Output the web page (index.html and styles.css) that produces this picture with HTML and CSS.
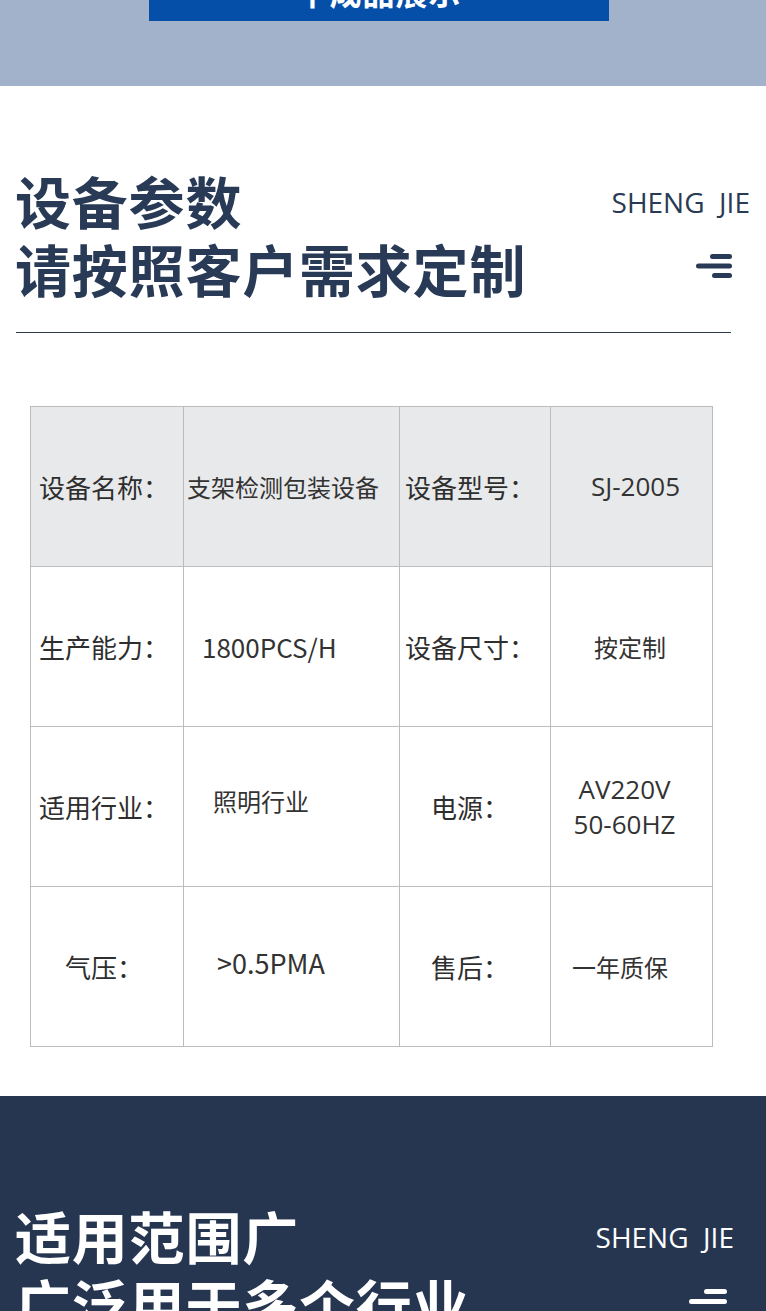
FILE: index.html
```html
<!DOCTYPE html>
<html lang="zh-CN">
<head>
<meta charset="utf-8">
<title>设备参数</title>
<link rel="stylesheet" href="styles.css">
</head>
<body>
<div class="top-band">
  <div class="banner">半成品展示</div>
</div>

<section class="params">
  <header class="sec-head">
    <h2 class="sec-title">设备参数<br>请按照客户需求定制</h2>
    <div class="brand">
      <div class="brand-name">SHENG&nbsp; JIE</div>
      <svg class="brand-icon" width="37" height="24" viewBox="0 0 37 24" aria-hidden="true">
        <rect x="14" y="0" width="22" height="5" rx="2.5"/>
        <rect x="0" y="9.5" width="36" height="5" rx="2.5"/>
        <rect x="16" y="19" width="20" height="5" rx="2.5"/>
      </svg>
    </div>
  </header>
  <hr class="rule">

  <table class="spec">
    <colgroup>
      <col class="c1"><col class="c2"><col class="c3"><col class="c4">
    </colgroup>
    <tr class="head-row">
      <td class="label">设备名称：</td>
      <td class="val pl-3">支架检测包装设备</td>
      <td class="label label-r">设备型号：</td>
      <td class="val num pl-40">SJ-2005</td>
    </tr>
    <tr>
      <td class="label">生产能力：</td>
      <td class="val cond pl-18">1800PCS/H</td>
      <td class="label label-r">设备尺寸：</td>
      <td class="val pl-43">按定制</td>
    </tr>
    <tr>
      <td class="label">适用行业：</td>
      <td class="val pl-29 up-6">照明行业</td>
      <td class="label label-r">电源：</td>
      <td class="val num center-l">AV220V<br>50-60HZ</td>
    </tr>
    <tr>
      <td class="label">气压：</td>
      <td class="val cond cond-l pl-33 up-4">&gt;0.5PMA</td>
      <td class="label label-r">售后：</td>
      <td class="val pl-21">一年质保</td>
    </tr>
  </table>
</section>

<section class="scope">
  <header class="sec-head sec-head-dark">
    <h2 class="sec-title">适用范围广<br>广泛用于多个行业</h2>
    <div class="brand">
      <div class="brand-name">SHENG&nbsp; JIE</div>
      <svg class="brand-icon brand-icon-dark" width="38" height="15" viewBox="0 0 38 15" aria-hidden="true">
        <rect x="15" y="0" width="23" height="5" rx="2.5"/>
        <rect x="0" y="10" width="38" height="5" rx="2.5"/>
      </svg>
    </div>
  </header>
</section>
</body>
</html>
```

FILE: styles.css
```css
html, body {
  margin: 0;
  padding: 0;
  background: #ffffff;
}

body {
  font-family: "Noto Sans CJK SC", "Noto Sans", sans-serif;
  color: #333333;
}

.top-band {
  display: flow-root;
  height: 86px;
  background: #a2b2ca;
  overflow: hidden;
}

.banner {
  width: 460px;
  height: 60px;
  margin: -39px 0 0 149px;
  background: #064fa9;
  color: #ffffff;
  font-weight: 700;
  font-size: 32px;
  line-height: 60px;
  text-align: center;
  letter-spacing: 1px;
}

.params {
  padding: 80px 0 49px;
}

.sec-head {
  display: flex;
  justify-content: space-between;
  align-items: flex-start;
  padding: 0 16px 0 15px;
}

.sec-title {
  margin: 0;
  font-family: "Noto Sans CJK SC", sans-serif;
  font-weight: 700;
  font-size: 56px;
  line-height: 68px;
  letter-spacing: 0.8px;
  color: #283a55;
}

.brand {
  display: flex;
  flex-direction: column;
  align-items: flex-end;
  padding-top: 19px;
}

.brand-name {
  font-family: "Open Sans", "Noto Sans", sans-serif;
  font-size: 28px;
  line-height: 34px;
  color: #283a55;
  white-space: nowrap;
}

.brand-icon {
  display: block;
  margin: 35px 17px 0 0;
  fill: #283a55;
}

.rule {
  margin: 30px 35px 0 16px;
  border: 0;
  border-top: 1px solid #2d3d50;
  height: 0;
}

.spec {
  margin: 73px 0 0 30px;
  border-collapse: collapse;
  table-layout: fixed;
  width: 682px;
}

.c1 { width: 153px; }
.c2 { width: 216px; }
.c3 { width: 151px; }
.c4 { width: 162px; }

.spec tr {
  height: 160px;
}

.spec td {
  border: 1px solid #bcbcbc;
  padding: 0;
  vertical-align: middle;
  font-size: 24px;
  line-height: 32px;
  color: #333333;
  white-space: nowrap;
}

.head-row td {
  background: #e8e9eb;
}

.spec .label {
  text-align: center;
  padding-right: 6px;
  font-size: 26px;
  font-weight: 400;
  color: #2e2e2e;
}

.spec .label-r {
  padding-right: 10px;
}

.val {
  text-align: left;
}

.spec .num {
  font-family: "Open Sans", "Noto Sans", sans-serif;
  font-size: 26px;
  line-height: 35px;
  font-weight: 500;
}

.spec .cond {
  font-family: "Noto Sans CJK SC", sans-serif;
  font-size: 26px;
}

.spec .cond-l {
  font-size: 27px;
}

.spec .center-l {
  text-align: center;
  padding-right: 14px;
}

.spec .pl-3 { padding-left: 3px; }
.spec .pl-18 { padding-left: 18px; }
.spec .pl-21 { padding-left: 21px; }
.spec .pl-29 { padding-left: 29px; }
.spec .pl-33 { padding-left: 33px; }
.spec .pl-40 { padding-left: 40px; }
.spec .pl-43 { padding-left: 43px; }

.spec .up-6 { padding-bottom: 12px; }
.spec .up-4 { padding-bottom: 8px; }

.scope {
  background: #263650;
  padding: 105px 0 120px;
}

.sec-head-dark {
  padding-right: 32px;
}

.sec-head-dark .sec-title,
.sec-head-dark .brand-name {
  color: #ffffff;
}

.brand-icon-dark {
  fill: #ffffff;
  margin-right: 7px;
}
```
